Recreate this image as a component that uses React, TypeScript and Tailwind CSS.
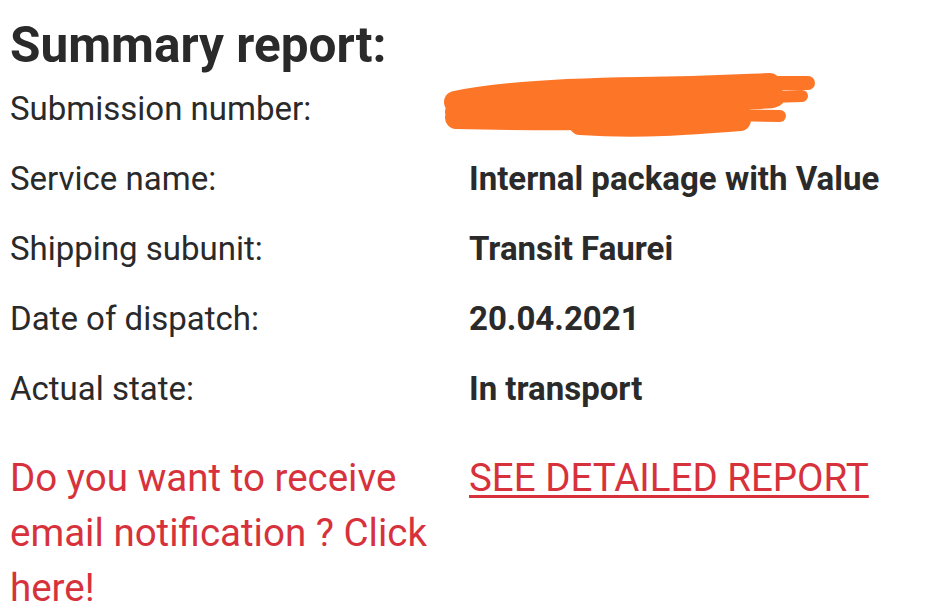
import React from "react";

const rows: [string, string][] = [
  ["Service name:", "Internal package with Value"],
  ["Shipping subunit:", "Transit Faurei"],
  ["Date of dispatch:", "20.04.2021"],
  ["Actual state:", "In transport"],
];

function Scribble() {
  return (
    <svg width="390" height="80" viewBox="0 0 390 80" className="absolute left-[-29px] top-[-4px]" aria-hidden>
      <g stroke="#fd7628" strokeLinecap="round" strokeLinejoin="round" fill="none">
        <path strokeWidth="22" d="M15 32 C 60 22, 130 19, 200 18 S 300 15, 330 14" />
        <path strokeWidth="20" d="M15 42 C 90 36, 200 32, 280 30 S 320 28, 335 27" />
        <path strokeWidth="22" d="M16 48 C 100 50, 200 50, 300 45" />
        <path strokeWidth="22" d="M140 54 C 200 58, 250 54, 300 50" />
        <path strokeWidth="22" d="M30 40 L 300 34" />
        <path strokeWidth="14" d="M300 13 L 368 13" />
        <path strokeWidth="12" d="M300 28 L 362 26" />
        <path strokeWidth="12" d="M290 45 L 340 46" />
      </g>
    </svg>
  );
}

export default function App() {
  return (
    <div className="w-[925px] h-[610px] bg-white overflow-hidden pl-[10px] text-[#2a2a2a] font-['Roboto',sans-serif]">
      <h1 className="text-[49.5px] font-bold leading-[50px] pt-[20px]">Summary report:</h1>
      <div className="grid grid-cols-[459px_1fr] text-[33px] mt-[4px]">
        <div className="leading-[70px]">Submission number:</div>
        <div className="relative h-[70px]">
          <Scribble />
        </div>
        {rows.map(([k, v]) => (
          <React.Fragment key={k}>
            <div className="leading-[70px]">{k}</div>
            <div className="leading-[70px] font-bold">{v}</div>
          </React.Fragment>
        ))}
        <div className="text-[#d7323c] text-[38.5px] leading-[55px] pt-[26px] pr-[25px]">
          Do you want to receive email notification ? Click here!
        </div>
        <div className="pt-[26px] text-[38.5px] leading-[55px]">
          <a href="#" className="text-[#d7323c] underline underline-offset-[4px] decoration-[2.5px]">SEE DETAILED REPORT</a>
        </div>
      </div>
    </div>
  );
}
